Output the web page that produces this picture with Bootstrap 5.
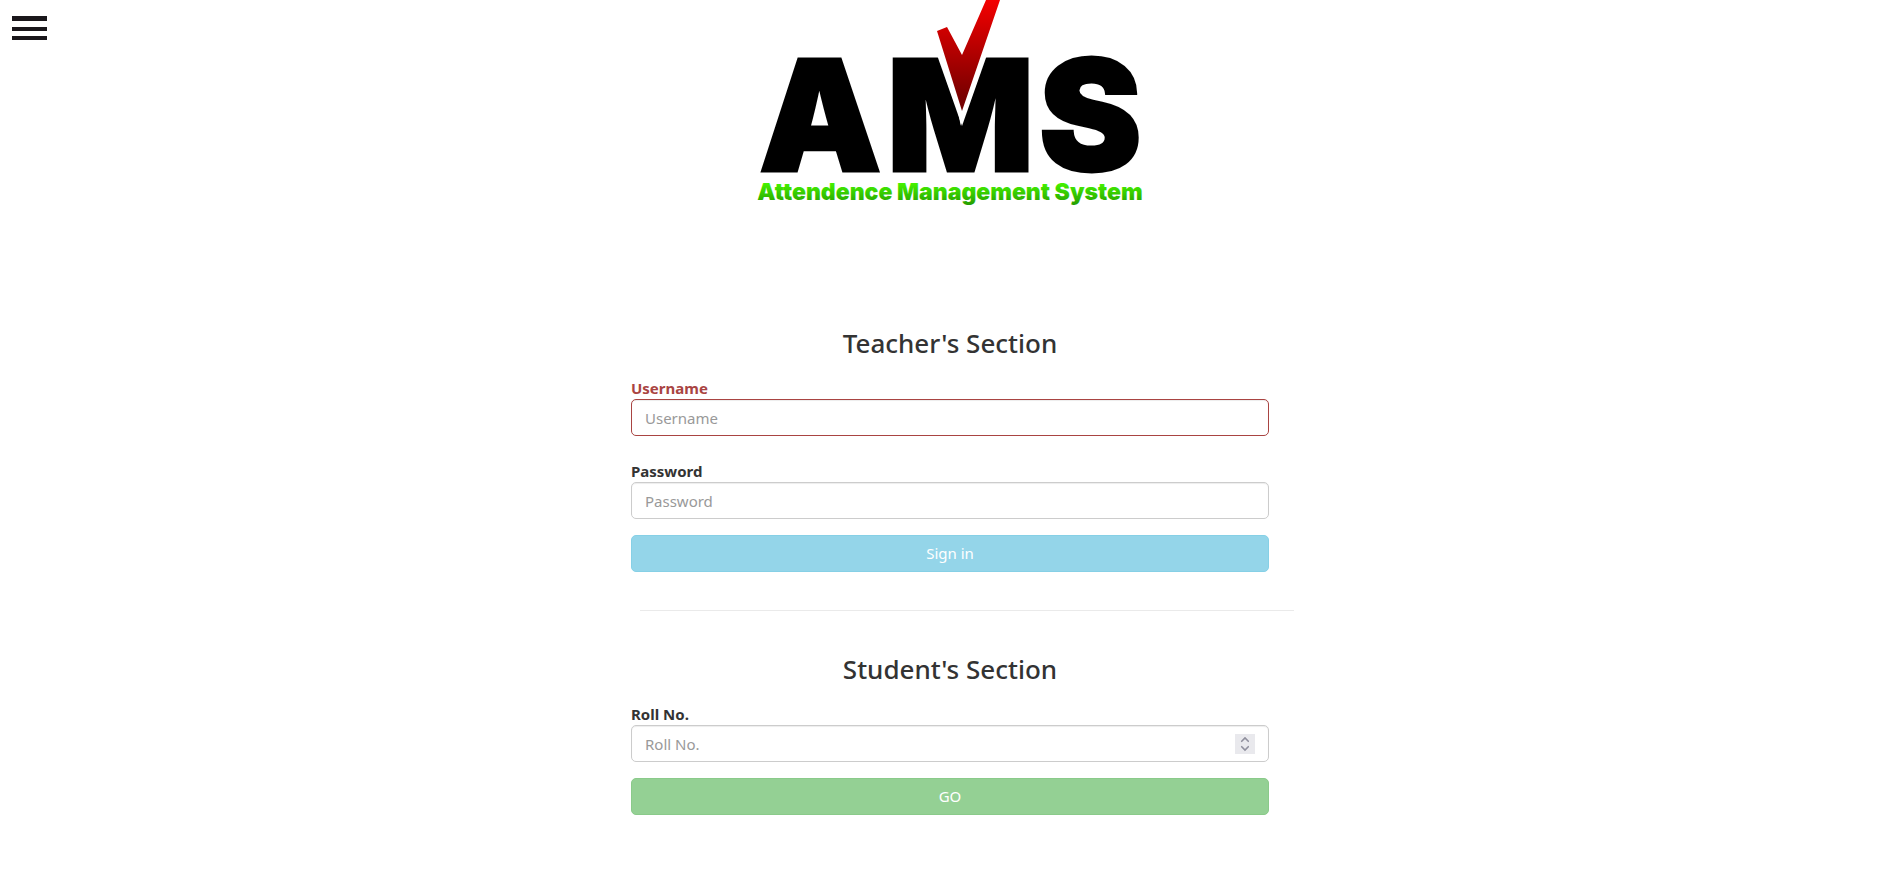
<!DOCTYPE html>
<html lang="en">
<head>
<meta charset="utf-8">
<meta name="viewport" content="width=device-width, initial-scale=1">
<title>Attendence Management System</title>
<link href="https://cdn.jsdelivr.net/npm/bootstrap@5.3.0/dist/css/bootstrap.min.css" rel="stylesheet">
<style>
  body { font-family: "Noto Sans", sans-serif; font-size: 15px; line-height: 21px; color: #333; background: #fff; }
  .menu-toggle { top: 16px; left: 12px; width: 35px; height: 24px; }
  .menu-toggle span { height: 4px; background: #1a171b; }
  .menu-toggle span:first-child { height: 5px; }
  .page { padding-left: 10px; }
  .logo { display: block; width: 400px; max-width: 100%; height: auto; }
  .logo text { font-family: Inter, sans-serif; font-weight: 900; }
  .logo .initials { font-size: 154px; stroke: #000; stroke-width: 3px; }
  .logo .tagline { font-size: 23px; }
  .forms { max-width: 638px; padding-top: 114px; }
  h2 { font-size: 26px; line-height: 30px; font-weight: 500; margin-bottom: 20px; }
  .form-label { display: block; font-weight: 700; margin-bottom: 0; }
  .form-control { height: 37px; padding: 6px 13px; font-size: 15px; line-height: 23px; color: #555; border-color: #ccc; border-radius: 5px; box-shadow: inset 0 1px 1px rgba(0,0,0,.075); }
  .form-control::placeholder { color: #999; }
  .has-error { margin-bottom: 25px; }
  .has-error .form-label { color: #a94442; }
  .has-error .form-control { border-color: #a94442; }
  .btn-wide { height: 37px; padding: 6px 12px; font-size: 15px; line-height: 23px; border-radius: 5px; }
  .btn-signin { --bs-btn-disabled-color: #fff; --bs-btn-disabled-bg: #5bc0de; --bs-btn-disabled-border-color: #46b8da; }
  .btn-go { --bs-btn-disabled-color: #fff; --bs-btn-disabled-bg: #5cb85c; --bs-btn-disabled-border-color: #4cae4c; }
  .divider { margin: 38px -25px 43px 9px; border-top: 1px solid #eaeaea; opacity: 1; }
  input[type=number]::-webkit-inner-spin-button {
    -webkit-appearance: none; opacity: 1; width: 20px; height: 20px;
    background: #e9e9ed url("data:image/svg+xml,%3Csvg xmlns='http://www.w3.org/2000/svg' viewBox='0 0 20 20' fill='none' stroke='%238f8f9d' stroke-width='1.6' stroke-linecap='round'%3E%3Cpath d='M6.700 7.300 10 4 13.300 7.300M6.700 12.700 10 16 13.300 12.700'/%3E%3C/svg%3E");
  }
</style>
</head>
<body>
<button type="button" class="menu-toggle position-absolute border-0 bg-transparent p-0 d-flex flex-column justify-content-between" aria-label="Menu">
  <span class="w-100"></span><span class="w-100"></span><span class="w-100"></span>
</button>
<div class="page">
  <header class="d-flex justify-content-center">
    <svg class="logo" viewBox="0 0 400 214" role="img" aria-label="AMS Attendence Management System">
      <defs>
        <linearGradient id="red" gradientUnits="userSpaceOnUse" x1="0" y1="0" x2="0" y2="111"><stop stop-color="#f40000"/><stop offset=".85" stop-color="#7c0000"/><stop offset="1" stop-color="#700000"/></linearGradient>
        <linearGradient id="green" gradientUnits="userSpaceOnUse" x1="0" y1="184" x2="0" y2="206"><stop stop-color="#44f000"/><stop offset="1" stop-color="#249800"/></linearGradient>
      </defs>
      <text class="initials" x="9 137 289" y="171">AMS</text>
      <path d="M187 55 212 126 237 55Z" fill="#fff"/>
      <path d="M187 31 197 27 212 55 236 0H250L212 111Z" fill="url(#red)"/>
      <text class="tagline" x="200" y="200" text-anchor="middle" fill="url(#green)">Attendence Management System</text>
    </svg>
  </header>
  <main class="forms mx-auto">
    <section>
      <h2 class="text-center">Teacher's Section</h2>
      <form>
        <div class="has-error">
          <label class="form-label" for="username">Username</label>
          <input class="form-control" id="username" type="text" placeholder="Username">
        </div>
        <div class="mb-3">
          <label class="form-label" for="password">Password</label>
          <input class="form-control" id="password" type="password" placeholder="Password">
        </div>
        <button type="submit" class="btn btn-wide btn-signin w-100 d-block" disabled>Sign in</button>
      </form>
    </section>
    <hr class="divider">
    <section>
      <h2 class="text-center">Student's Section</h2>
      <form>
        <div class="mb-3">
          <label class="form-label" for="roll">Roll No.</label>
          <input class="form-control" id="roll" type="number" placeholder="Roll No.">
        </div>
        <button type="submit" class="btn btn-wide btn-go w-100 d-block" disabled>GO</button>
      </form>
    </section>
  </main>
</div>
<script src="https://cdn.jsdelivr.net/npm/bootstrap@5.3.0/dist/js/bootstrap.bundle.min.js"></script>
</body>
</html>
